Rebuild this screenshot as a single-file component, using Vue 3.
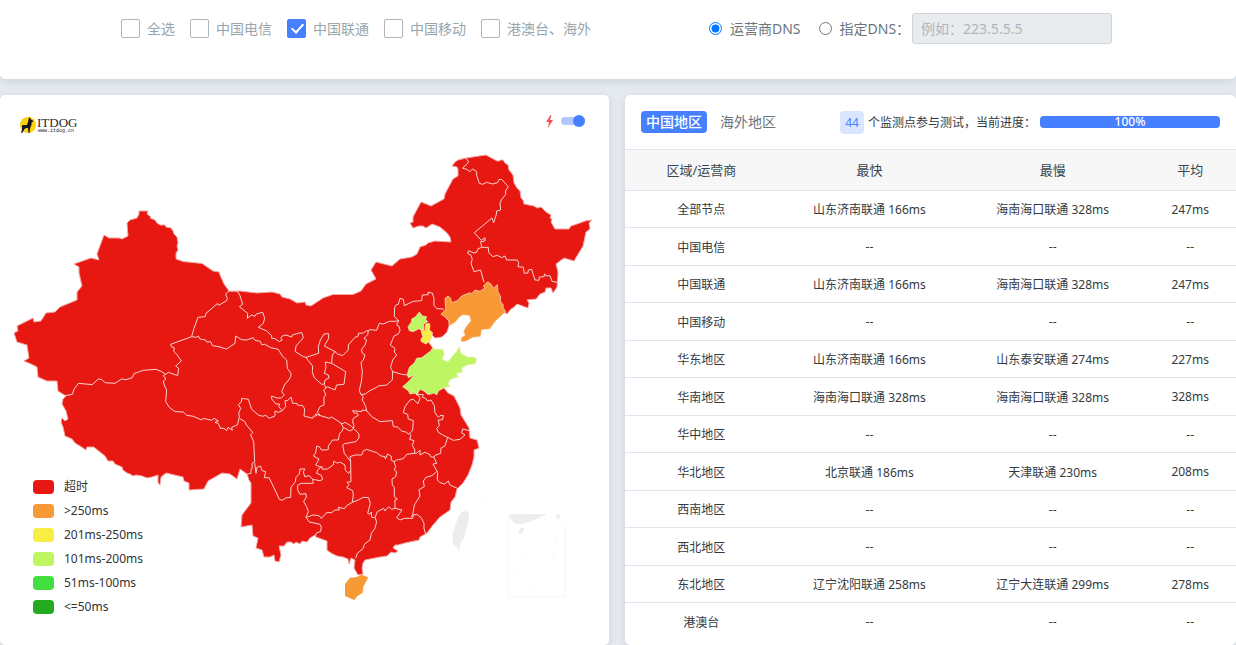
<script setup>
import { ref } from 'vue'

const carriers = ref([
  { id: 'all', label: '全选', checked: false },
  { id: 'telecom', label: '中国电信', checked: false },
  { id: 'unicom', label: '中国联通', checked: true },
  { id: 'mobile', label: '中国移动', checked: false },
  { id: 'overseas', label: '港澳台、海外', checked: false }
])
const dnsMode = ref('carrier')
const customDns = ref('')
const fastMode = ref(true)
const nodeCount = 44
const progress = 100

const legend = [
  { level: 'timeout', label: '超时' },
  { level: 'slow', label: '>250ms' },
  { level: 'mid', label: '201ms-250ms' },
  { level: 'fair', label: '101ms-200ms' },
  { level: 'good', label: '51ms-100ms' },
  { level: 'best', label: '<=50ms' }
]

const rows = [
  ['全部节点', '山东济南联通 166ms', '海南海口联通 328ms', '247ms'],
  ['中国电信', '--', '--', '--'],
  ['中国联通', '山东济南联通 166ms', '海南海口联通 328ms', '247ms'],
  ['中国移动', '--', '--', '--'],
  ['华东地区', '山东济南联通 166ms', '山东泰安联通 274ms', '227ms'],
  ['华南地区', '海南海口联通 328ms', '海南海口联通 328ms', '328ms'],
  ['华中地区', '--', '--', '--'],
  ['华北地区', '北京联通 186ms', '天津联通 230ms', '208ms'],
  ['西南地区', '--', '--', '--'],
  ['西北地区', '--', '--', '--'],
  ['东北地区', '辽宁沈阳联通 258ms', '辽宁大连联通 299ms', '278ms'],
  ['港澳台', '--', '--', '--']
]

const mainland =
  'M139 211L148 211L147 214L151 217L150 218L155 220L157 223L160 225L165 225L166 227L171 228L173 231L174 234L177 237L178 243L177 246L178 250L176 253L176 259L183 261.500L202 263.500L213 271L219 272L220 275L224 284L229 291L240 291L257 293L272 292L280 294L282 297L290 299L297 303L305 302L306 305L311 306L323 298L333 294.500L353 294.500L361 291L366 284L376 279L371 270L376 262L392 266L400 259L412 257L417 254L420 247L426 245L428 243L435 241L451 242L450 237L447 233L440 227L432 224L429 226L426 228L423 226L419 226L413 228L410 223L413 222L413 217L421 202L431 206L444 199L445 194L453 179L458 176L458 169L457 167L452 166L455 162L458 160L466 158L486 155L497 161L499 161L501 160L503 160L505 163L508 165L509 170L513 175L514 183L517 188L520 191L521 198L523 200L524 204L534 206L537 208L541 207L546 212L551 215L550 218L552 219L551 222L555 229L569 229L571 226L580 223L585 221L592 220L589 223L590 229L586 232L583 246L574 261L564 258L556 264L558 272L557 287L553 293L551 288L546 288L545 292L540 294L536 299L527 300L529 303L528 308L517 304L514 307L510 310L507 314L500 308L485 298L452 308L449 326L447 332L442 337L435 338L432 335L429 343L433 348L442 360L438 385L444 388L448 393L454 396L457 402L460 408L461 415L466 423L469 428L470 438L477 440L479 448L474 450L474 457L472 465L468 475L463 483L460 486L457 489L455 497L451 502L450 510L440 517L433 525L427 533L420 537L419 540L405 543L398 545L395 545L393 548L398 551L395 553L391 552L387 556L380 557L365 560L363 563L362 568L363 574L358 575L354 568L355 560L351 558L349 564L348 559L343 557L337 556L331 553L327 550L327 541L316 537L315 535L310 538L307 542L302 541L300 544L296 542L294 544L291 542L287 542L284 546L279 546L281 555L279 562L275 561L274 555L270 557L264 557L262 550L256 548L258 538L253 536L252 525L241 527L242 515L251 503L251 483L249 480L247 474L240 469L237 479L230 474L222 473L208 481L204 489L189 490L189 483L184 481L183 477L166 473L161 477L160 485L158 483L158 475L152 477L147 478L142 476L136 475L133 476L130 474L127 473L123 470L122 467L115 464L113 461L108 461L105 456L95 448L94 447L87 447L86 450L80 446L75 443L72 439L65 436L63 427L61 422L62 418L65 421L68 419L66 411L62 404L63 399L66 396L58 391L57 381L47 381L38 377L37 367L31 364L24 361L29 358L27 345L17 342L14 333L18 331L17 326L27 321L33 318L34 322L41 321L46 313L55 312L60 307L77 300L77 292L82 286L79 273L79 267L74 264L91 258L99 260L97 254L104 235L109 238L119 238L122 239L128 236L127 223L130 220L137 218L139 214Z'

// Province boundaries, grouped by the part of the country they cover.
// Each group is drawn at three units per map pixel from its own origin.
const borders = [
  {
    at: 'translate(0 280) scale(.3333)',
    d: 'M195 347L217 343L222 328L235 310L277 314L295 297L306 299L315 308L345 310L365 297L378 299L397 293L402 281L430 271L468 268L485 275L497 283L505 277L533 287L536 265L527 258L544 243L530 223L521 213L523 203L514 200L512 193L575 170L582 145L594 112L616 110L618 100L630 90L653 70L656 76L680 62L682 55L677 42L686 33L712 33M575 170L590 172L595 168L600 177L617 180L620 186L632 185L637 197L662 201M497 283L490 287L498 297L490 303L494 318L500 330L497 365L508 382L525 395L550 396L560 406L580 409L605 420L610 415L635 421L642 415L655 423L645 427L655 431L662 446'
  },
  {
    at: 'translate(220 260) scale(.3333)',
    d: 'M52 93L60 107L68 133L58 140L83 160L82 175L94 165L105 169L109 162L128 157L134 175L130 190L115 202L140 213L155 227L155 235L165 236L178 245L187 240L182 235L187 228L198 225L215 231L217 225L245 217L250 232L246 238L228 258L226 275L250 290L258 292L296 280L295 260L301 240L312 222L326 221L326 235L313 258L345 275L353 282L368 287L385 270L385 255L405 232L415 228L415 220L430 219L440 212L445 213L448 209L470 211L478 190L490 192L508 184L525 184L536 182L523 170L524 142L529 134L535 133L540 115L550 118L553 137L580 124L605 122L607 105L625 104L624 97L637 99L642 115L642 136L650 146L672 147M0 262L20 267L45 250L47 228L65 239L80 240L100 233L105 241L121 244L125 254L134 253L152 263L175 268L187 288L200 300L202 325L213 340L212 350L204 363L195 372L185 395L193 405L184 414L170 414L155 408L155 417L168 432L179 432L176 440L187 452L175 457L165 453L165 468L148 475L137 466L128 469L115 465L95 448L85 418L65 415L64 426L55 434L62 445L56 460L58 472L52 495L35 502L37 511L24 502L20 512L12 505L0 505M187 452L197 440L195 422L203 422L213 411L218 430L231 430L232 435L248 437L254 447L252 468L278 475L280 469L290 467L286 462L300 466L292 456L300 440L312 435L312 410L318 405L311 390L322 380L345 390L350 375L372 373L377 335L335 310L316 306L318 322L313 340L325 345L327 354L315 360L313 372L305 373L282 352L277 335L278 318L265 302L258 292M335 310L337 285L345 275M313 373L318 385M298 466L328 475L335 471L360 487L366 492L375 487L390 496L395 500M445 213L443 224L432 235L440 240L435 255L425 268L426 278L435 285L430 300L423 307L427 335L425 360L418 392L423 404L436 402L450 392L470 382L475 378L500 375L517 360L518 335L512 322L518 300L530 285L523 276L525 265L511 255L518 238L522 228L535 222L540 212L538 200L530 195L536 182M423 404L430 410L426 421L430 424L437 440L440 452L426 450L425 455L398 452L403 460L411 459L415 466L400 475L398 486L402 497L400 507M518 335L545 343L563 345M440 452L455 470L480 485L517 482L520 500L532 501L540 508L545 513L560 517L565 523L578 512L580 482L565 477L563 463L550 458L555 440L570 420L580 418L594 431L600 416L598 409L588 403L610 404L607 412L617 415L623 423L633 420L643 437'
  },
  {
    at: 'translate(360 140) scale(.3333)',
    d: 'M318 54L326 66L308 85L318 87L330 95L338 87L350 95L350 106L358 130L368 133L380 127L398 132L413 128L417 119L425 118L445 140L437 152L437 163L424 180L420 190L422 210L410 213L409 224L401 248L396 234L343 278L360 297L365 301L375 293L375 303L362 305L365 322L385 322L386 337L398 350L412 346L425 353L435 348L440 360L472 360L476 368L474 380L490 382L493 400L504 399L505 390L515 388L525 420L537 421L538 411L553 410L553 402L561 408L570 407L576 424L592 427M365 322L353 327L350 337L341 339L326 332L323 340L333 346L337 358L333 370L342 395L362 390L372 427'
  },
  {
    at: 'translate(220 400) scale(.3333)',
    d: 'M58 55L75 65L79 75L98 97L92 105L101 125L104 185L96 190L97 205L93 207L93 220L80 223M104 188L108 220L111 202L122 198L126 212L137 215L133 233L147 233L158 255L178 298L187 301L197 294L212 292L213 262L226 245L228 232L238 222L240 207L255 207L250 215L254 230L268 227L278 238L280 250L243 250L233 256L233 270L240 283L258 281L259 291L251 305L260 320L265 335L258 352L268 366L300 373L304 382L302 394L288 400L287 408M278 238L300 242L308 238L304 226L290 220L293 210L305 199L308 208L322 207L340 195L342 183L350 189L361 187L375 195L376 211L386 220L391 213M305 203L287 195L293 185L297 177L280 168L287 159L290 138L300 142L304 150L318 150L325 148L325 138L338 120L355 120L359 100L367 93L370 82L362 69M395 80L402 86L417 102L417 113L408 125L374 131L368 135L373 160L392 185L393 245L381 247L387 254L380 263L398 272L400 285L397 307M370 82L390 93L400 87M392 185L390 170L405 165L425 165L430 153L440 148L470 158L483 168L495 170L496 177L503 162L515 170L513 180L522 185L530 180L550 176L560 163L583 160L585 150L577 137L582 122L569 118L573 106L567 100M583 160L590 160L600 150L600 165L615 157L630 164L632 170L642 172L645 166L662 160L663 144L675 138L683 112L668 105L655 97L650 85L658 77L655 60L668 59L670 46L660 47L655 52L645 38L643 17M683 112L700 121L720 118L735 105L725 99L728 87L748 92M642 172L650 190L639 192L653 217L652 240L660 248L674 252L685 243L690 255L712 265M650 215L636 227L618 232L610 243L613 260L597 269L600 288L583 315L578 345L591 343L605 355L612 370L612 385L618 405M522 185L527 200L523 210L530 215L527 230L516 237L517 255L523 262L523 290L532 297L525 300L525 325M397 307L380 317L373 326L355 322L358 330L345 330L335 338L320 338L304 355L297 347L279 345L265 350L258 352M397 307L415 300L430 292L446 293L451 310L443 340L449 343L454 336L455 352L465 353L472 335L491 325L495 333L506 320L515 328L525 325L546 330L530 353L540 360L553 355L578 355L575 347L583 349M465 353L470 365L465 385L454 400L450 420L433 433L430 445L412 460L407 475'
  }
]
</script>

<template>
  <main class="page">
    <form class="card filters" @submit.prevent>
      <div class="carriers">
        <label v-for="c in carriers" :key="c.id" class="check">
          <input v-model="c.checked" type="checkbox" />
          <span>{{ c.label }}</span>
        </label>
      </div>
      <div class="dns">
        <label class="radio">
          <input v-model="dnsMode" type="radio" name="dns" value="carrier" />
          <span>运营商DNS</span>
        </label>
        <label class="radio">
          <input v-model="dnsMode" type="radio" name="dns" value="custom" />
          <span>指定DNS：</span>
        </label>
        <input
          v-model="customDns"
          class="dns-input"
          type="text"
          aria-label="指定DNS"
          placeholder="例如：223.5.5.5"
          :disabled="dnsMode !== 'custom'"
        />
      </div>
    </form>

    <div class="panels">
      <section class="card map-card">
        <header class="map-head">
          <svg class="logo" width="60" height="20" viewBox="0 0 60 20" role="img" aria-label="ITDOG">
            <circle cx="8" cy="9" r="8" fill="#fbd20d" />
            <path
              d="M9.500 1L11 3.500L13.500 5L12.500 6L11.500 6.500L11.500 9L10.500 11L10 13L9.500 17H8.500L8 12L6 12L4 13.500L3.500 15L2 17H1L2 13.500L2 9.500L3 9L7 9L8 6L8.500 3.500Z"
              fill="#1b1718"
            />
            <text x="17" y="11" class="logo-name">ITDOG</text>
            <text x="18" y="16" class="logo-site">www.itdog.cn</text>
          </svg>
          <label class="turbo">
            <svg width="7" height="13" viewBox="0 0 7 13" aria-hidden="true">
              <path d="M4.500 0L0 7H3L2 13L7 5H4L5.500 0Z" fill="#f55057" />
            </svg>
            <input v-model="fastMode" type="checkbox" aria-label="极速模式" />
          </label>
        </header>

        <div class="map-body">
          <svg class="map" viewBox="0 149 609 496" role="img" aria-label="中国地图">
            <path class="timeout land" :d="mainland" />
            <g class="borders">
              <path v-for="b in borders" :key="b.at" :transform="b.at" :d="b.d" />
            </g>
            <g class="province" transform="translate(380 280) scale(.3333)">
              <path
                class="slow"
                d="M183 103L197 88L195 55L205 48L212 55L215 68L232 62L245 48L270 38L275 41L285 30L300 34L315 24L310 18L322 6L328 8L335 15L340 25L352 14L354 35L362 50L361 63L370 75L369 82L377 95L345 125L330 147L305 150L302 170L280 172L258 184L248 186L243 183L243 174L255 165L250 155L257 142L272 122L268 107L248 105L238 112L225 128L208 137L206 122L192 108Z"
              />
              <path
                class="fair"
                d="M158 203L168 208L188 207L193 223L187 235L195 243L205 244L230 213L238 198L243 220L265 232L278 230L290 235L287 252L262 255L245 265L248 277L230 280L235 292L212 298L205 310L210 320L193 323L175 333L170 345L162 339L150 343L143 343L132 333L120 328L112 342L102 340L90 342L85 332L68 320L84 306L103 285L85 293L82 283L88 262L103 249L110 235L125 233L145 218L152 213Z"
              />
              <path
                class="fair"
                d="M118 96L127 108L140 110L137 118L143 125L130 133L132 150L115 147L100 155L88 152L84 140L95 125L95 117L107 110Z"
              />
              <path
                class="mid"
                d="M135 141L137 132L148 130L150 137L148 150L158 158L154 172L150 184L137 192L123 184L123 177L128 170L123 150L136 152Z"
              />
            </g>
            <path
              class="slow"
              transform="translate(220 400) scale(.3333)"
              d="M375 552L390 533L408 532L425 524L445 532L430 560L428 578L413 588L403 600L375 588Z"
            />
            <g class="sea" transform="translate(440 480) scale(.3333)">
              <path d="M75 92L87 98L85 125L72 175L60 192L58 215L52 203L38 190L38 160L55 110L65 97Z" />
              <path d="M135 72L141 67L141 74Z" />
              <path d="M205 108L214 102L315 102L318 105L270 125L240 133L224 131Z" />
              <path d="M346 104L362 104L355 120Z" />
              <path d="M236 152L243 144L254 143L247 160L236 161Z" />
              <path
                class="sea-lines"
                d="M205 110V351H376V140M370 124L363 134M345 178V194M342 225L334 239M315 276L306 290M248 229L239 240M221 274L225 286M241 180L238 190M268 322L278 319"
              />
            </g>
          </svg>
          <ul class="legend">
            <li v-for="item in legend" :key="item.level">
              <i class="swatch" :class="item.level"></i>
              <span>{{ item.label }}</span>
            </li>
          </ul>
        </div>
      </section>

      <section class="card stats">
        <header class="stats-head">
          <nav class="tabs">
            <button type="button" class="tab active">中国地区</button>
            <button type="button" class="tab">海外地区</button>
          </nav>
          <div class="status">
            <span class="badge">{{ nodeCount }}</span>
            <span>个监测点参与测试，当前进度：</span>
            <div class="track" role="progressbar" aria-label="当前进度" :aria-valuenow="progress">
              <div class="bar" :style="{ width: progress + '%' }">{{ progress }}%</div>
            </div>
          </div>
        </header>
        <table>
          <thead>
            <tr>
              <th class="region">区域/运营商</th>
              <th class="speed">最快</th>
              <th class="speed">最慢</th>
              <th>平均</th>
            </tr>
          </thead>
          <tbody>
            <tr v-for="row in rows" :key="row[0]">
              <td v-for="(cell, i) in row" :key="i">{{ cell }}</td>
            </tr>
          </tbody>
        </table>
      </section>
    </div>
  </main>
</template>

<style>
body {
  background: #e6ebf0;
}
</style>

<style scoped>
.page {
  font-family: "Noto Sans", "Noto Sans CJK SC", sans-serif;
  font-size: 12px;
  color: #343a40;
}
.page *,
.page {
  box-sizing: border-box;
}
.card {
  background: #fff;
  border-radius: 5px;
  box-shadow: 0 2px 10px rgba(60, 72, 100, 0.16);
}
.filters,
.panels {
  display: grid;
  grid-template-columns: 609fr 611fr;
  gap: 16px;
}
.filters {
  border-radius: 0 0 5px 5px;
  padding: 13px 0 35px;
  margin-bottom: 16px;
  font-size: 14px;
  line-height: 20px;
}
.carriers {
  display: flex;
  align-items: center;
  gap: 15px;
  padding-left: 121px;
  color: #98a6ad;
  white-space: nowrap;
}
.check {
  display: flex;
  align-items: center;
  gap: 7px;
}
.check input {
  appearance: none;
  width: 19px;
  height: 19px;
  margin: 0;
  border: 1px solid #adb5bd;
  border-radius: 2px;
  background: #fff;
}
.check input:checked {
  border-color: #467fff;
  background: #467fff;
}
.check input:checked::after {
  content: "";
  display: block;
  width: 5px;
  height: 10px;
  margin: 1px 0 0 6px;
  border: solid #fff;
  border-width: 0 2px 2px 0;
  transform: rotate(42deg);
}
.dns {
  display: flex;
  align-items: center;
  padding-left: 84px;
  color: #6c757d;
  white-space: nowrap;
}
.radio {
  display: flex;
  align-items: center;
  gap: 8px;
}
.radio + .radio {
  margin-left: 18px;
}
.radio input {
  width: 13px;
  height: 13px;
  margin: 0;
}
.dns-input {
  width: 200px;
  height: 31px;
  margin-left: 2px;
  padding: 4px 8px;
  border: 1px solid #ced4da;
  border-radius: 3px;
  background: #fff;
  font: inherit;
}
.dns-input:disabled {
  background: #e9ecef;
}
.dns-input::placeholder {
  color: #adb5bd;
  opacity: 1;
}
.map-head {
  display: flex;
  justify-content: space-between;
  align-items: center;
  height: 54px;
  padding: 0 24px 2px 20px;
}
.logo {
  margin-top: 10px;
}
.logo-name {
  font: 13px "Liberation Serif", serif;
  fill: #2b2627;
}
.logo-site {
  font: 5px "Liberation Mono", monospace;
  fill: #2b2627;
}
.turbo {
  display: flex;
  align-items: center;
  gap: 8px;
}
.turbo input {
  appearance: none;
  display: flex;
  align-items: center;
  width: 24px;
  height: 8px;
  margin: 0;
  border-radius: 4px;
  background: #ccc;
}
.turbo input::after {
  content: "";
  width: 12px;
  height: 12px;
  border-radius: 6px;
  background: #888;
}
.turbo input:checked {
  justify-content: flex-end;
  background: #b0c8ff;
}
.turbo input:checked::after {
  background: #467fff;
}
.map-body {
  position: relative;
}
.map {
  display: block;
  width: 100%;
}
.timeout {
  fill: #e71812;
  background: #e71812;
}
.slow {
  fill: #f79935;
  background: #f79935;
}
.mid {
  fill: #f8ed45;
  background: #f8ed45;
}
.fair {
  fill: #bef663;
  background: #bef663;
}
.good {
  background: #42e03f;
}
.best {
  background: #24aa1e;
}
.land {
  stroke: #f3a5a0;
  stroke-width: 1;
  stroke-linejoin: round;
}
.borders {
  fill: none;
  stroke: #f6d5d2;
  stroke-width: 3;
  stroke-linejoin: round;
}
.province {
  stroke: #f9ecd8;
  stroke-width: 2;
  stroke-linejoin: round;
}
.sea {
  fill: #eceeee;
}
.sea-lines {
  fill: none;
  stroke: #f4f5f5;
  stroke-width: 3;
}
.legend {
  position: absolute;
  left: 33px;
  bottom: 26px;
  margin: 0;
  padding: 0;
  list-style: none;
  color: #333;
}
.legend li {
  display: flex;
  align-items: center;
  gap: 10px;
  height: 24px;
}
.legend span {
  padding-bottom: 2px;
}
.swatch {
  width: 21px;
  height: 14px;
  border-radius: 4px;
}
.stats-head {
  display: flex;
  justify-content: space-between;
  align-items: center;
  height: 54px;
  padding: 0 16px;
}
.tabs {
  display: flex;
  gap: 8px;
}
.tab {
  padding: 0 5px;
  border: 0;
  border-radius: 4px;
  background: none;
  color: #6c757d;
  font: inherit;
  font-size: 14px;
  line-height: 22px;
}
.tab.active {
  background: #467fff;
  color: #fff;
  font-weight: 500;
}
.status {
  display: flex;
  align-items: center;
  gap: 4px;
  white-space: nowrap;
}
.badge {
  padding: 0 5px;
  border-radius: 4px;
  background: #dae5ff;
  color: #467fff;
  font-size: 12px;
  line-height: 23px;
}
.track {
  width: 180px;
  height: 12px;
  border-radius: 4px;
  background: #e9ecef;
}
.bar {
  height: 12px;
  border-radius: 4px;
  background: #467fff;
  color: #fff;
  font-weight: 500;
  line-height: 12px;
  text-align: center;
}
table {
  width: 100%;
  table-layout: fixed;
  border-collapse: collapse;
  text-align: center;
}
th {
  height: 41px;
  padding: 0 0 2px;
  border-top: 1px solid #dee5ec;
  background: #f7f7f7;
  color: #37474f;
  font-size: 13px;
  font-weight: 400;
}
.region {
  width: 25%;
}
.speed {
  width: 30%;
}
td {
  height: 37px;
  padding: 0;
  border-top: 1px solid #dee5ec;
}
tr:nth-child(even) td {
  height: 38px;
}
</style>
